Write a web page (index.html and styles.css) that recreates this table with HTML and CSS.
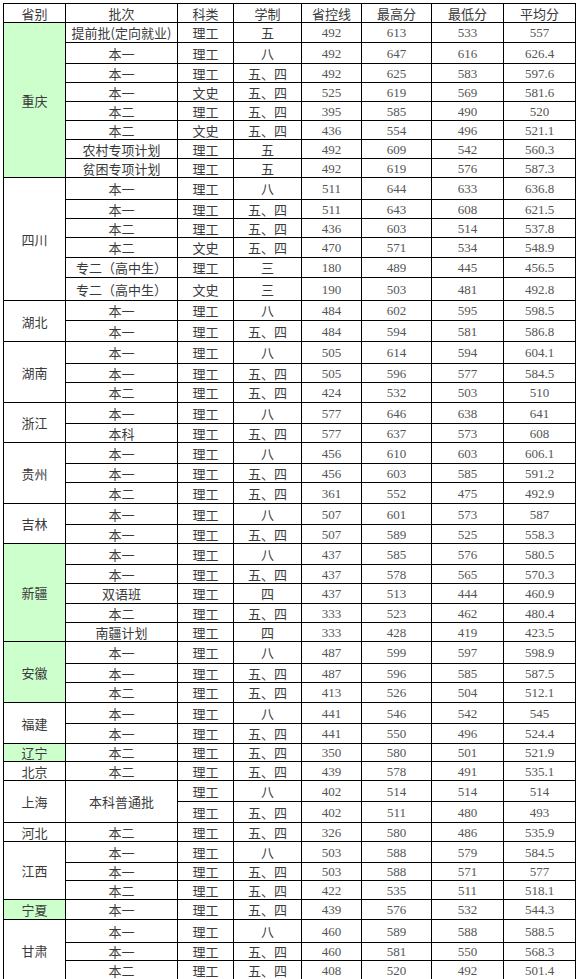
FILE: index.html
```html
<!DOCTYPE html>
<html lang="zh-CN">
<head>
<meta charset="utf-8">
<title>录取分数</title>
<link rel="stylesheet" href="styles.css">
</head>
<body>
<div class="wrap">
<table class="scores">
<colgroup>
<col class="c1"><col class="c2"><col class="c3"><col class="c4"><col class="c5"><col class="c6"><col class="c7"><col class="c8">
</colgroup>
<tr class="h19"><td>省别</td><td>批次</td><td>科类</td><td>学制</td><td>省控线</td><td>最高分</td><td>最低分</td><td>平均分</td></tr>

<tr class="h20"><td rowspan="8" class="prov green">重庆</td><td>提前批(定向就业)</td><td>理工</td><td>五</td><td class="n">492</td><td class="n">613</td><td class="n">533</td><td class="n">557</td></tr>
<tr class="h21"><td>本一</td><td>理工</td><td>八</td><td class="n">492</td><td class="n">647</td><td class="n">616</td><td class="n">626.4</td></tr>
<tr class="h19"><td>本一</td><td>理工</td><td>五、四</td><td class="n">492</td><td class="n">625</td><td class="n">583</td><td class="n">597.6</td></tr>
<tr class="h19"><td>本一</td><td>文史</td><td>五、四</td><td class="n">525</td><td class="n">619</td><td class="n">569</td><td class="n">581.6</td></tr>
<tr class="h19"><td>本二</td><td>理工</td><td>五、四</td><td class="n">395</td><td class="n">585</td><td class="n">490</td><td class="n">520</td></tr>
<tr class="h19"><td>本二</td><td>文史</td><td>五、四</td><td class="n">436</td><td class="n">554</td><td class="n">496</td><td class="n">521.1</td></tr>
<tr class="h19"><td>农村专项计划</td><td>理工</td><td>五</td><td class="n">492</td><td class="n">609</td><td class="n">542</td><td class="n">560.3</td></tr>
<tr class="h19"><td>贫困专项计划</td><td>理工</td><td>五</td><td class="n">492</td><td class="n">619</td><td class="n">576</td><td class="n">587.3</td></tr>

<tr class="h22"><td rowspan="6" class="prov">四川</td><td>本一</td><td>理工</td><td>八</td><td class="n">511</td><td class="n">644</td><td class="n">633</td><td class="n">636.8</td></tr>
<tr class="h19"><td>本一</td><td>理工</td><td>五、四</td><td class="n">511</td><td class="n">643</td><td class="n">608</td><td class="n">621.5</td></tr>
<tr class="h19"><td>本二</td><td>理工</td><td>五、四</td><td class="n">436</td><td class="n">603</td><td class="n">514</td><td class="n">537.8</td></tr>
<tr class="h20"><td>本二</td><td>文史</td><td>五、四</td><td class="n">470</td><td class="n">571</td><td class="n">534</td><td class="n">548.9</td></tr>
<tr class="h20"><td>专二（高中生）</td><td>理工</td><td>三</td><td class="n">180</td><td class="n">489</td><td class="n">445</td><td class="n">456.5</td></tr>
<tr class="h23"><td>专二（高中生）</td><td>文史</td><td>三</td><td class="n">190</td><td class="n">503</td><td class="n">481</td><td class="n">492.8</td></tr>

<tr class="h20"><td rowspan="2" class="prov">湖北</td><td>本一</td><td>理工</td><td>八</td><td class="n">484</td><td class="n">602</td><td class="n">595</td><td class="n">598.5</td></tr>
<tr class="h21"><td>本一</td><td>理工</td><td>五、四</td><td class="n">484</td><td class="n">594</td><td class="n">581</td><td class="n">586.8</td></tr>

<tr class="h22"><td rowspan="3" class="prov">湖南</td><td>本一</td><td>理工</td><td>八</td><td class="n">505</td><td class="n">614</td><td class="n">594</td><td class="n">604.1</td></tr>
<tr class="h19"><td>本一</td><td>理工</td><td>五、四</td><td class="n">505</td><td class="n">596</td><td class="n">577</td><td class="n">584.5</td></tr>
<tr class="h20"><td>本二</td><td>理工</td><td>五、四</td><td class="n">424</td><td class="n">532</td><td class="n">503</td><td class="n">510</td></tr>

<tr class="h21"><td rowspan="2" class="prov">浙江</td><td>本一</td><td>理工</td><td>八</td><td class="n">577</td><td class="n">646</td><td class="n">638</td><td class="n">641</td></tr>
<tr class="h19"><td>本科</td><td>理工</td><td>五、四</td><td class="n">577</td><td class="n">637</td><td class="n">573</td><td class="n">608</td></tr>

<tr class="h21"><td rowspan="3" class="prov">贵州</td><td>本一</td><td>理工</td><td>八</td><td class="n">456</td><td class="n">610</td><td class="n">603</td><td class="n">606.1</td></tr>
<tr class="h19"><td>本一</td><td>理工</td><td>五、四</td><td class="n">456</td><td class="n">603</td><td class="n">585</td><td class="n">591.2</td></tr>
<tr class="h21"><td>本二</td><td>理工</td><td>五、四</td><td class="n">361</td><td class="n">552</td><td class="n">475</td><td class="n">492.9</td></tr>

<tr class="h21"><td rowspan="2" class="prov">吉林</td><td>本一</td><td>理工</td><td>八</td><td class="n">507</td><td class="n">601</td><td class="n">573</td><td class="n">587</td></tr>
<tr class="h19"><td>本一</td><td>理工</td><td>五、四</td><td class="n">507</td><td class="n">589</td><td class="n">525</td><td class="n">558.3</td></tr>

<tr class="h21"><td rowspan="5" class="prov green">新疆</td><td>本一</td><td>理工</td><td>八</td><td class="n">437</td><td class="n">585</td><td class="n">576</td><td class="n">580.5</td></tr>
<tr class="h19"><td>本一</td><td>理工</td><td>五、四</td><td class="n">437</td><td class="n">578</td><td class="n">565</td><td class="n">570.3</td></tr>
<tr class="h20"><td>双语班</td><td>理工</td><td>四</td><td class="n">437</td><td class="n">513</td><td class="n">444</td><td class="n">460.9</td></tr>
<tr class="h19"><td>本二</td><td>理工</td><td>五、四</td><td class="n">333</td><td class="n">523</td><td class="n">462</td><td class="n">480.4</td></tr>
<tr class="h19"><td>南疆计划</td><td>理工</td><td>四</td><td class="n">333</td><td class="n">428</td><td class="n">419</td><td class="n">423.5</td></tr>

<tr class="h22"><td rowspan="3" class="prov green">安徽</td><td>本一</td><td>理工</td><td>八</td><td class="n">487</td><td class="n">599</td><td class="n">597</td><td class="n">598.9</td></tr>
<tr class="h19"><td>本一</td><td>理工</td><td>五、四</td><td class="n">487</td><td class="n">596</td><td class="n">585</td><td class="n">587.5</td></tr>
<tr class="h20"><td>本二</td><td>理工</td><td>五、四</td><td class="n">413</td><td class="n">526</td><td class="n">504</td><td class="n">512.1</td></tr>

<tr class="h21"><td rowspan="2" class="prov">福建</td><td>本一</td><td>理工</td><td>八</td><td class="n">441</td><td class="n">546</td><td class="n">542</td><td class="n">545</td></tr>
<tr class="h20"><td>本一</td><td>理工</td><td>五、四</td><td class="n">441</td><td class="n">550</td><td class="n">496</td><td class="n">524.4</td></tr>

<tr class="h18"><td class="prov green">辽宁</td><td>本二</td><td>理工</td><td>五、四</td><td class="n">350</td><td class="n">580</td><td class="n">501</td><td class="n">521.9</td></tr>

<tr class="h19"><td class="prov">北京</td><td>本二</td><td>理工</td><td>五、四</td><td class="n">439</td><td class="n">578</td><td class="n">491</td><td class="n">535.1</td></tr>

<tr class="h21"><td rowspan="2" class="prov">上海</td><td rowspan="2">本科普通批</td><td>理工</td><td>八</td><td class="n">402</td><td class="n">514</td><td class="n">514</td><td class="n">514</td></tr>
<tr class="h21"><td>理工</td><td>五、四</td><td class="n">402</td><td class="n">511</td><td class="n">480</td><td class="n">493</td></tr>

<tr class="h19"><td class="prov">河北</td><td>本二</td><td>理工</td><td>五、四</td><td class="n">326</td><td class="n">580</td><td class="n">486</td><td class="n">535.9</td></tr>

<tr class="h21"><td rowspan="3" class="prov">江西</td><td>本一</td><td>理工</td><td>八</td><td class="n">503</td><td class="n">588</td><td class="n">579</td><td class="n">584.5</td></tr>
<tr class="h18"><td>本一</td><td>理工</td><td>五、四</td><td class="n">503</td><td class="n">588</td><td class="n">571</td><td class="n">577</td></tr>
<tr class="h19"><td>本二</td><td>理工</td><td>五、四</td><td class="n">422</td><td class="n">535</td><td class="n">511</td><td class="n">518.1</td></tr>

<tr class="h20"><td class="prov green">宁夏</td><td>本一</td><td>理工</td><td>五、四</td><td class="n">439</td><td class="n">576</td><td class="n">532</td><td class="n">544.3</td></tr>

<tr class="h23"><td rowspan="3" class="prov">甘肃</td><td>本一</td><td>理工</td><td>八</td><td class="n">460</td><td class="n">589</td><td class="n">588</td><td class="n">588.5</td></tr>
<tr class="h18"><td>本一</td><td>理工</td><td>五、四</td><td class="n">460</td><td class="n">581</td><td class="n">550</td><td class="n">568.3</td></tr>
<tr class="h20"><td>本二</td><td>理工</td><td>五、四</td><td class="n">408</td><td class="n">520</td><td class="n">492</td><td class="n">501.4</td></tr>
</table>
</div>
</body>
</html>
```

FILE: styles.css
```css
html, body {
  margin: 0;
  padding: 0;
  background: #ffffff;
}

.wrap {
  padding: 3px 0 0 3px;
}

.scores {
  border-collapse: collapse;
  table-layout: fixed;
  width: 573px;
  font-family: "Noto Sans CJK SC", "Liberation Sans", sans-serif;
  font-size: 13px;
  color: #3a3a3a;
}

.scores td {
  border: 1px solid #000;
  padding: 0;
  text-align: center;
  vertical-align: middle;
  line-height: 15px;
  white-space: nowrap;
  overflow: hidden;
}

.scores td.n {
  font-family: "Liberation Serif", "Times New Roman", serif;
  font-size: 13px;
  color: #555;
}

.scores td.green {
  background: #ccffcc;
}

.c1 { width: 62px; }
.c2 { width: 112px; }
.c3 { width: 56px; }
.c4 { width: 68px; }
.c5 { width: 60px; }
.c6 { width: 70px; }
.c7 { width: 72px; }
.c8 { width: 72px; }

.h18 { height: 18px; }
.h19 { height: 19px; }
.h20 { height: 20px; }
.h21 { height: 21px; }
.h22 { height: 22px; }
.h23 { height: 23px; }
```
